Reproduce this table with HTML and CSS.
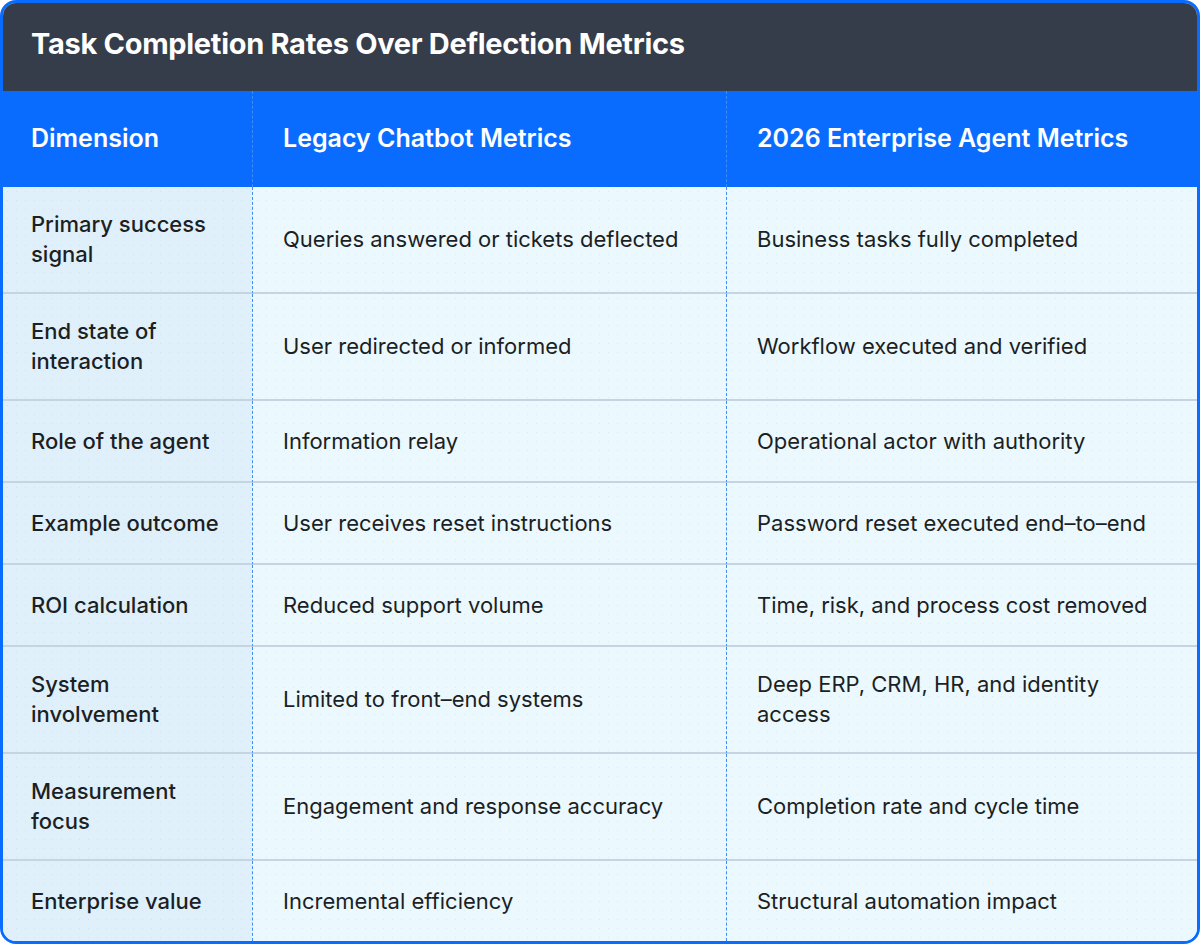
FILE: index.html
```html
<!DOCTYPE html>
<html lang="en">
<head>
<meta charset="utf-8">
<title>Task Completion Rates Over Deflection Metrics</title>
<link rel="stylesheet" href="styles.css">
</head>
<body>
<div class="card">
  <div class="title">Task Completion Rates Over Deflection Metrics</div>
  <div class="table">
    <div class="th c1">Dimension</div>
    <div class="th c2">Legacy Chatbot Metrics</div>
    <div class="th c3">2026 Enterprise Agent Metrics</div>

    <div class="td c1">Primary success signal</div>
    <div class="td c2">Queries answered or tickets deflected</div>
    <div class="td c3">Business tasks fully completed</div>

    <div class="td c1">End state of interaction</div>
    <div class="td c2">User redirected or informed</div>
    <div class="td c3">Workflow executed and verified</div>

    <div class="td c1">Role of the agent</div>
    <div class="td c2">Information relay</div>
    <div class="td c3">Operational actor with authority</div>

    <div class="td c1">Example outcome</div>
    <div class="td c2">User receives reset instructions</div>
    <div class="td c3">Password reset executed end–to–end</div>

    <div class="td c1">ROI calculation</div>
    <div class="td c2">Reduced support volume</div>
    <div class="td c3">Time, risk, and process cost removed</div>

    <div class="td c1">System involvement</div>
    <div class="td c2">Limited to front–end systems</div>
    <div class="td c3">Deep ERP, CRM, HR, and identity access</div>

    <div class="td c1">Measurement focus</div>
    <div class="td c2">Engagement and response accuracy</div>
    <div class="td c3">Completion rate and cycle time</div>

    <div class="td c1 last">Enterprise value</div>
    <div class="td c2 last">Incremental efficiency</div>
    <div class="td c3 last">Structural automation impact</div>
  </div>
</div>
</body>
</html>
```

FILE: styles.css
```css
* { box-sizing: border-box; }
html, body { margin: 0; padding: 0; background: #ffffff; }
body {
  font-family: Inter, "Noto Sans", "Liberation Sans", sans-serif;
  width: 1200px;
  height: 944px;
}
.card {
  width: 1200px;
  height: 944px;
  border: 3px solid #0a6cff;
  border-radius: 16px;
  overflow: hidden;
  display: flex;
  flex-direction: column;
  background: #ebf8fd;
}
.title {
  background: #363d4a;
  color: #ffffff;
  height: 88px;
  flex: none;
  display: flex;
  align-items: center;
  padding-left: 28px;
  padding-bottom: 8px;
  font-size: 29px;
  font-weight: 700;
  letter-spacing: -0.3px;
}
.table {
  flex: 1;
  display: grid;
  grid-template-columns: 249px 474px 1fr;
  grid-template-rows: 96px;
  grid-auto-rows: auto;
}
.th {
  background: #0a6cff;
  color: #ffffff;
  font-size: 25px;
  font-weight: 600;
  display: flex;
  align-items: center;
  padding: 0 20px 2px 30px;
}
.th.c1 { padding-left: 28px; }
.td {
  font-size: 22px;
  line-height: 30px;
  color: #1c1f23;
  display: flex;
  align-items: center;
  min-height: 82px;
  padding: 22px 20px 23px 30px;
  border-bottom: 2px solid #c5d4e0;
  background-color: #ebf8fd;
  background-image: radial-gradient(circle, rgba(120,170,210,0.18) 0.8px, transparent 1px);
  background-size: 9px 9px;
}
.td.c1 {
  padding-left: 28px;
  padding-right: 30px;
  font-weight: 500;
  background-color: #e0f0fa;
}
.td.last { border-bottom: none; min-height: 80px; }
.c2, .c3 {
  border-left: 1px dashed #3f8cf7;
}
```
